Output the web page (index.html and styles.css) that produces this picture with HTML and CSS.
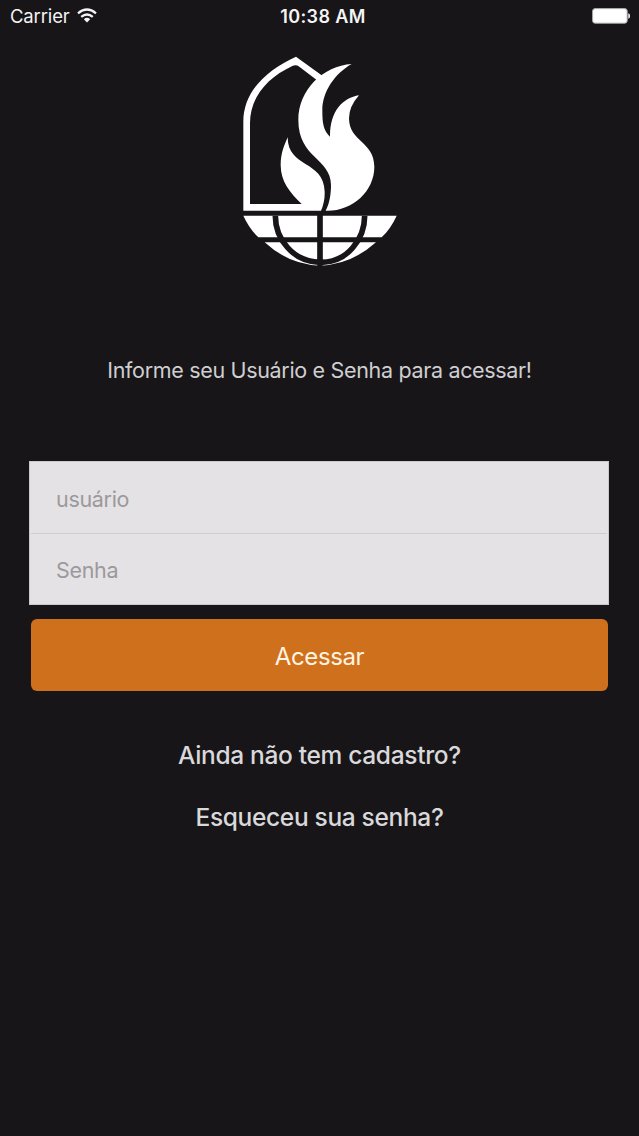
FILE: index.html
```html
<!DOCTYPE html>
<html lang="pt-BR">
<head>
<meta charset="utf-8">
<title>Acessar</title>
<link rel="stylesheet" href="styles.css">
</head>
<body>
<header class="status">
  <div class="status-left"><span>Carrier</span>
    <svg class="wifi" viewBox="0 0 20 15" width="20" height="15"><g fill="none" stroke="#f4f4f4" stroke-width="2.3"><path d="M1 5.3Q10-2.2 19 5.3M4.2 8.9Q10 4 15.8 8.9"/></g><path d="M6.8 11.2Q10 8.3 13.2 11.2L10 14.5Z" fill="#f4f4f4"/></svg>
  </div>
  <span class="clock">10:38 AM</span>
  <div class="status-right">
    <svg viewBox="0 0 39 16" width="39" height="16"><rect x="1.6" y=".6" width="34.6" height="14.6" rx="2.5" fill="#fff" stroke="#aaa" stroke-width="1"/><path d="M37.3 5.2Q39 5.5 39 8T37.3 10.8Z" fill="#fff"/></svg>
  </div>
</header>
<main class="login">
  <svg class="logo" viewBox="0 0 510 675" width="170" height="225">
    <g fill="#fff">
      <path d="M25 482V215C25 120 100 58 183 20L264 79L248 92L193 50Q183 43 172 48C95 84 45 143 45 220V462H200C165 428 137 395 137 345C137 310 148 285 158 262C158 355 267 330 269 425Q270 455 258 482Z"/>
      <path d="M350 42C265 47 190 120 190 210C190 325 288 325 288 405C288 435 283 462 272 482C350 485 418 425 418 350C418 275 342 275 342 205Q342 170 372 136C325 144 285 180 285 260C265 242 262 220 262 180C262 125 300 70 350 42Z"/>
      <path d="M25 497H485Q468 535 440 562H70Q43 536 25 497ZM89 577H423Q350 643 255 647Q160 643 89 577Z"/>
    </g>
    <path d="M121 497C121 565 172 635 255 637S389 565 389 497M255 490V650" fill="none" stroke="#171518" stroke-width="17"/>
  </svg>
  <p class="intro"><span>Informe seu Usuário e Senha para acessar!</span></p>
  <form class="form">
    <div class="fields">
      <input class="field" type="text" placeholder="usuário" aria-label="usuário">
      <input class="field" type="password" placeholder="Senha" aria-label="Senha">
    </div>
    <button class="submit" type="button">Acessar</button>
  </form>
  <nav class="links"><a class="signup">Ainda não tem cadastro?</a><a class="forgot">Esqueceu sua senha?</a></nav>
</main>
</body>
</html>
```
FILE: styles.css
```css
* { box-sizing: border-box; }
body { margin: 0; min-height: 1136px; background: #171518; color: #d9d8da; font-family: Inter, Roboto, sans-serif; }
.status { height: 34px; display: grid; grid-template-columns: 1fr auto 1fr; align-items: center; padding: 0 9px 2px 10px; color: #f4f4f4; font-size: 18.5px; }
.status-left { display: flex; align-items: center; gap: 8px; letter-spacing: -.15px; }
.wifi { margin-left: -1px; margin-top: -2px; }
.status svg { display: block; }
.clock { font-weight: 600; font-size: 18px; letter-spacing: .4px; padding-left: 6px; }
.status-right { display: flex; justify-content: flex-end; }
.login { display: flex; flex-direction: column; align-items: center; padding-top: 16px; }
.logo { display: block; }
.intro { margin: 79px 0 0; font-size: 21.5px; line-height: 32px; letter-spacing: -.33px; white-space: nowrap; color: #cfced0; }
.form { width: 580px; margin-top: 75px; display: flex; flex-direction: column; align-items: center; }
.fields { width: 580px; height: 144px; margin-left: -1px; background: #e4e2e5; border: 1px solid #c9c8ca; padding: 0 1px; }
.field { display: block; width: 100%; height: 71px; border: 0; border-radius: 0; padding: 2px 25px 0; background: transparent; color: #444; font: 21.5px Inter, Roboto, sans-serif; letter-spacing: -.33px; outline: 0; }
.field + .field { border-top: 1px solid #cfcdd0; padding-top: 1px; }
.field::placeholder { color: #9b999c; opacity: 1; }
.submit { width: 577px; height: 72px; margin-top: 14px; border: 0; border-radius: 6px; background: #cf701c; color: #fff3e2; font: 24px Inter, Roboto, sans-serif; letter-spacing: -.4px; padding: 2px 0 0; }
.links { display: flex; flex-direction: column; align-items: center; gap: 30px; margin-top: 48px; font-size: 24.5px; font-weight: 500; letter-spacing: -.33px; line-height: 32px; white-space: nowrap; }
```
